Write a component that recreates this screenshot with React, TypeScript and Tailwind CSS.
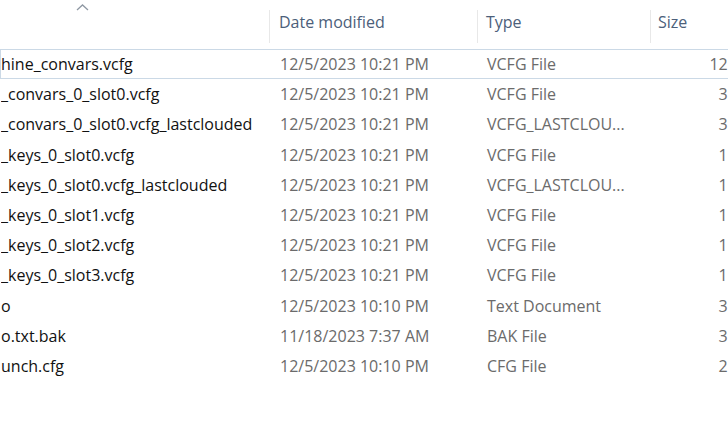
import React from "react";

const rows = [
  { name: "hine_convars.vcfg", date: "12/5/2023 10:21 PM", type: "VCFG File", size: "12 KB" },
  { name: "_convars_0_slot0.vcfg", date: "12/5/2023 10:21 PM", type: "VCFG File", size: "3 KB" },
  { name: "_convars_0_slot0.vcfg_lastclouded", date: "12/5/2023 10:21 PM", type: "VCFG_LASTCLOU...", size: "3 KB" },
  { name: "_keys_0_slot0.vcfg", date: "12/5/2023 10:21 PM", type: "VCFG File", size: "1 KB" },
  { name: "_keys_0_slot0.vcfg_lastclouded", date: "12/5/2023 10:21 PM", type: "VCFG_LASTCLOU...", size: "1 KB" },
  { name: "_keys_0_slot1.vcfg", date: "12/5/2023 10:21 PM", type: "VCFG File", size: "1 KB" },
  { name: "_keys_0_slot2.vcfg", date: "12/5/2023 10:21 PM", type: "VCFG File", size: "1 KB" },
  { name: "_keys_0_slot3.vcfg", date: "12/5/2023 10:21 PM", type: "VCFG File", size: "1 KB" },
  { name: "o", date: "12/5/2023 10:10 PM", type: "Text Document", size: "3 KB" },
  { name: "o.txt.bak", date: "11/18/2023 7:37 AM", type: "BAK File", size: "3 KB" },
  { name: "unch.cfg", date: "12/5/2023 10:10 PM", type: "CFG File", size: "2 KB" },
];

export default function App() {
  return (
    <div
      className="w-[728px] h-[437px] overflow-hidden bg-white relative"
      style={{ fontFamily: '"Open Sans", "Noto Sans", sans-serif' }}
    >
      <div className="w-[780px]">
        {/* Header */}
        <div className="relative flex h-[49px] text-[16px] text-[#4c607a]">
          <svg className="absolute left-[76px] top-[3px]" width="13" height="9" viewBox="0 0 13 9">
            <path d="M1 7 L6.5 2 L12 7" fill="none" stroke="#8f98a3" strokeWidth="1.3" />
          </svg>
          <div className="w-[269px] shrink-0" />
          <div className="w-[208px] shrink-0 flex items-start pt-[10px]">
            <div className="w-px h-[33px] bg-[#e8e8e8]" />
            <span className="pl-[9px] leading-[24px]">Date modified</span>
          </div>
          <div className="w-[173px] shrink-0 flex items-start pt-[10px]">
            <div className="w-px h-[33px] bg-[#e8e8e8]" />
            <span className="pl-[8px] leading-[24px]">Type</span>
          </div>
          <div className="flex-1 flex items-start pt-[10px]">
            <div className="w-px h-[33px] bg-[#e8e8e8]" />
            <span className="pl-[7px] leading-[24px]">Size</span>
          </div>
        </div>
        {/* Rows */}
        {rows.map((r, i) => (
          <div
            key={i}
            className={
              "flex items-center h-[30.2px] text-[16px] border " +
              (i === 0 ? "border-[#cbd9e6]" : "border-transparent")
            }
          >
            <div className="w-[269px] shrink-0 text-[#111] whitespace-nowrap overflow-hidden">{r.name}</div>
            <div className="w-[208px] shrink-0 pl-[10px] text-[#6b6b6b] whitespace-nowrap">{r.date}</div>
            <div className="w-[173px] shrink-0 pl-[9px] text-[#6b6b6b] whitespace-nowrap">{r.type}</div>
            <div className="w-[101px] shrink-0 text-right text-[#6b6b6b] whitespace-nowrap">{r.size}</div>
          </div>
        ))}
      </div>
    </div>
  );
}
